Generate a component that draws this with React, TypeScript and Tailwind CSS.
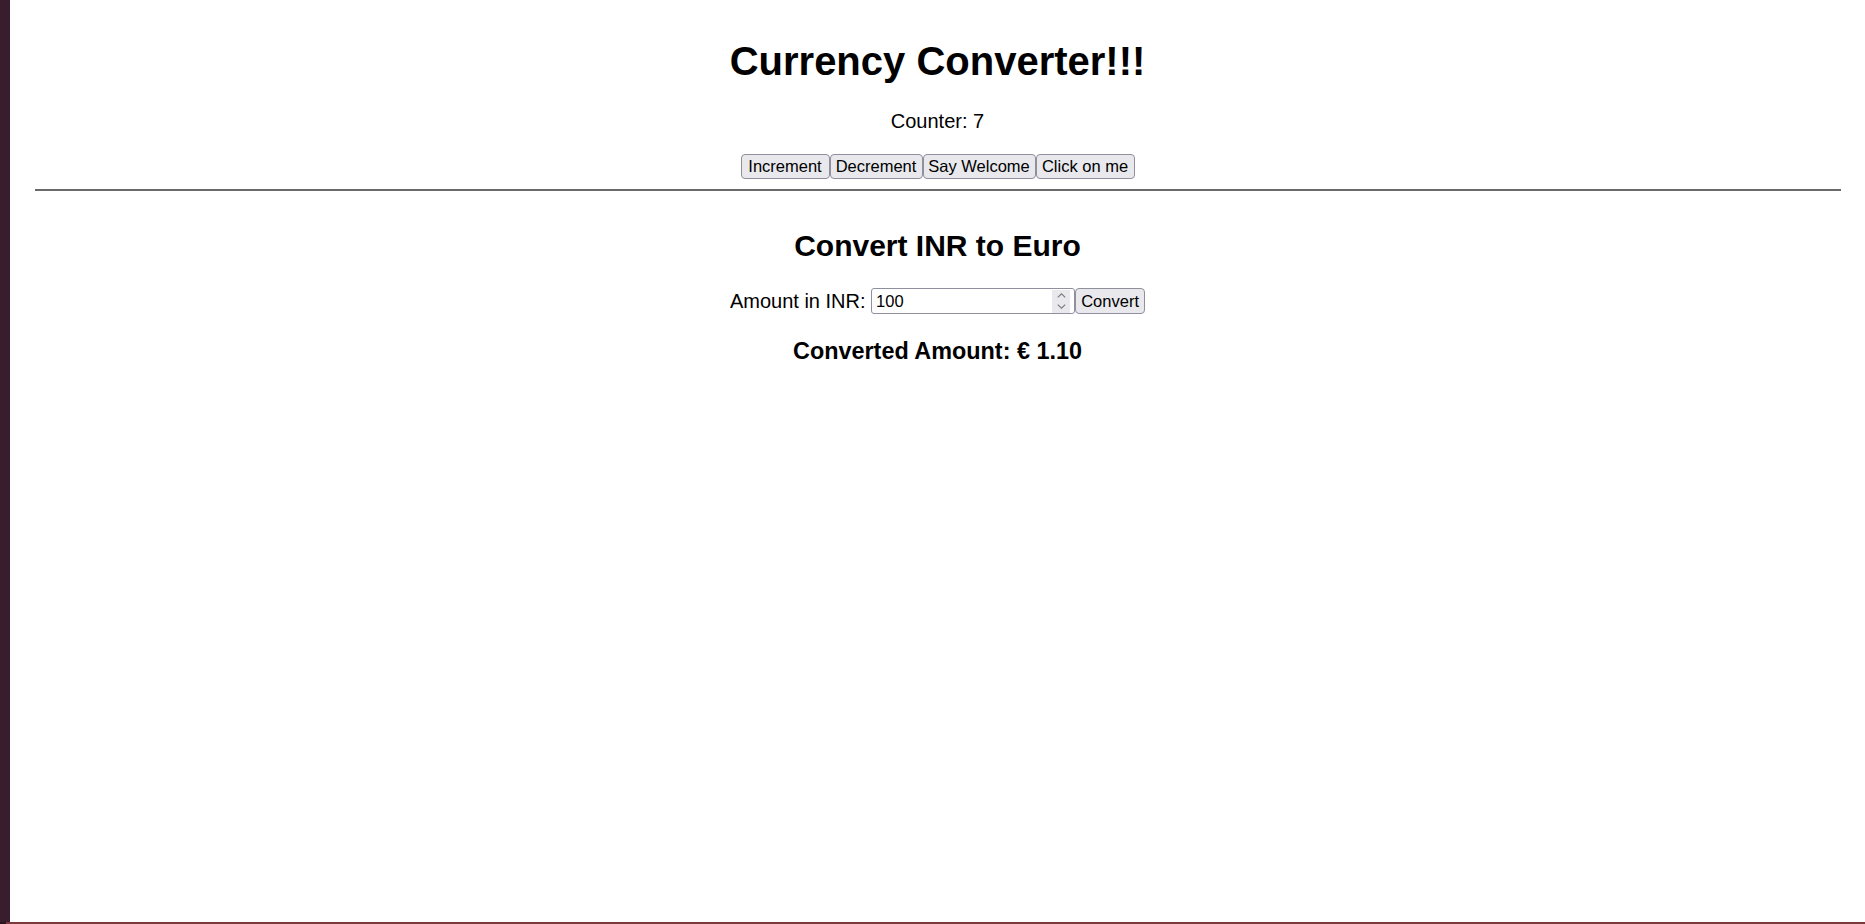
import React from "react";

const btn =
  "h-[25px] bg-[#e9e9ed] border border-[#8f8f9d] rounded-[4px] text-[16.5px] text-black flex items-center justify-center leading-none";

export default function App() {
  return (
    <div
      className="w-[1865px] h-[924px] flex flex-col overflow-hidden bg-white"
      style={{ fontFamily: '"Liberation Sans", Arial, sans-serif' }}
    >
      <div className="flex flex-1 min-h-0">
        <div className="w-[10px] bg-[#3a1d2c]" />
        <div className="flex-1 flex flex-col text-black">
          <h1 className="mt-[41px] text-[40px] leading-[40px] font-bold text-center">
            Currency Converter!!!
          </h1>
          <p className="mt-[30px] text-[20px] leading-[20px] text-center">Counter: 7</p>
          <div className="mt-[23px] flex justify-center">
            <button className={`${btn} w-[89px]`}>Increment</button>
            <button className={`${btn} w-[93px]`}>Decrement</button>
            <button className={`${btn} w-[113px]`}>Say Welcome</button>
            <button className={`${btn} w-[99px]`}>Click on me</button>
          </div>
          <div className="mt-[10px] ml-[25px] mr-[24px] h-[2px] bg-[#6a6a6a]" />
          <h2 className="mt-[40px] text-[30px] leading-[30px] font-bold text-center">
            Convert INR to Euro
          </h2>
          <div className="mt-[27px] h-[26px] flex items-center justify-center">
            <span className="text-[20px] leading-[20px] whitespace-pre">Amount in INR: </span>
            <div className="w-[204px] h-[26px] border border-[#8f8f9d] rounded-[3px] bg-white flex items-center">
              <input
                readOnly
                value="100"
                className="flex-1 min-w-0 h-full pl-[4px] text-[16.5px] outline-none bg-transparent text-black"
                style={{ fontFamily: '"Liberation Sans", Arial, sans-serif' }}
              />
              <div className="w-[18px] h-[23px] mr-[4px] bg-[#e9e9ed] flex flex-col items-center justify-center gap-[6px]">
                <svg width="9" height="5" viewBox="0 0 9 5" fill="none">
                  <path d="M0.8 4.4 L4.5 0.8 L8.2 4.4" stroke="#7a7a7a" strokeWidth="1.1" />
                </svg>
                <svg width="9" height="5" viewBox="0 0 9 5" fill="none">
                  <path d="M0.8 0.6 L4.5 4.2 L8.2 0.6" stroke="#7a7a7a" strokeWidth="1.1" />
                </svg>
              </div>
            </div>
            <button className={`${btn} h-[26px] w-[70px]`}>Convert</button>
          </div>
          <h3 className="mt-[25px] text-[23.4px] leading-[24px] font-bold text-center">
            Converted Amount: € 1.10
          </h3>
        </div>
      </div>
      <div className="h-[2px] flex">
        <div className="w-[6px] bg-[#2c1420]" />
        <div className="flex-1 bg-[#7a3a3c]" />
      </div>
    </div>
  );
}
